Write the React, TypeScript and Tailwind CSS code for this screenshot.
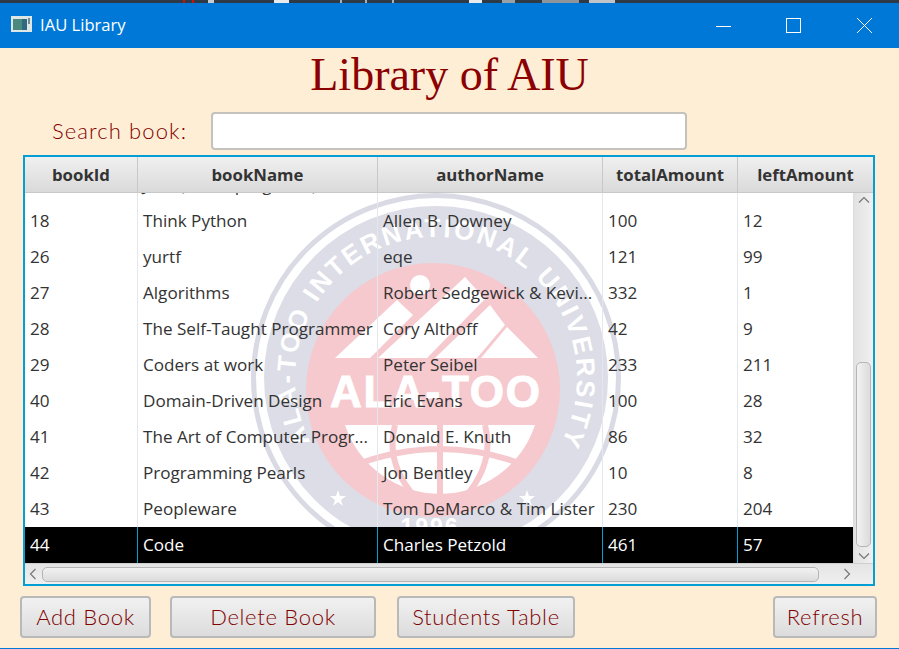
const rows = [
  ["18", "Think Python", "Allen B. Downey", "100", "12"],
  ["26", "yurtf", "eqe", "121", "99"],
  ["27", "Algorithms", "Robert Sedgewick & Kevi...", "332", "1"],
  ["28", "The Self-Taught Programmer", "Cory Althoff", "42", "9"],
  ["29", "Coders at work", "Peter Seibel", "233", "211"],
  ["40", "Domain-Driven Design", "Eric Evans", "100", "28"],
  ["41", "The Art of Computer Progr...", "Donald E. Knuth", "86", "32"],
  ["42", "Programming Pearls", "Jon Bentley", "10", "8"],
  ["43", "Peopleware", "Tom DeMarco & Tim Lister", "230", "204"],
];

const colClass = ["w-[113px]", "w-[240px]", "w-[225px]", "w-[135px]", "w-[115px]"];
const headClass = ["w-[113px]", "w-[240px]", "w-[225px]", "w-[135px]", "flex-1"];

function Seal() {
  return (
    <svg className="absolute left-[220px] top-0" width="400" height="372" viewBox="0 0 400 372">
      <defs>
        <path id="sealRing" d="M 65.4 249 A 141 141 0 1 1 316.6 249" />
      </defs>
      <circle cx="191" cy="185" r="182.5" fill="none" stroke="#d9dae4" strokeWidth="5" />
      <circle cx="191" cy="185" r="172" fill="#dcdde6" />
      <circle cx="188" cy="197" r="127" fill="#f5c9ce" />
      <text fontFamily="Liberation Sans, sans-serif" fontSize="26" fontWeight="700" fill="#ffffff">
        <textPath href="#sealRing" textLength="576" lengthAdjust="spacing">ALA-TOO INTERNATIONAL UNIVERSITY</textPath>
      </text>
      <polygon points="90,165 152,107 168,122 125,165" fill="#ffffff" />
      <polygon points="133,165 220,84 240,106 182,165" fill="#ffffff" />
      <polygon points="190,165 245,112 260,132 232,165" fill="#ffffff" />
      <polygon points="236,165 262,134 293,165" fill="#ffffff" />
      <circle cx="175" cy="92" r="10" fill="#ffffff" />
      <text x="190" y="214" textAnchor="middle" textLength="210" lengthAdjust="spacing" fontFamily="Liberation Sans, sans-serif" fontSize="44" fontWeight="700" fill="#ffffff" stroke="#ffffff" strokeWidth="1">
        ALA-TOO
      </text>
      <path d="M100 232 H290 A100 100 0 0 1 100 232 Z" fill="#ffffff" />
      <path d="M195 232V304M150 232Q140 270 170 304M240 232Q250 270 220 304M105 274Q195 238 285 274" fill="none" stroke="#f5c9ce" strokeWidth="6" />
      <polygon points="93,297 95,303 101,303 96,307 98,313 93,309 88,313 90,307 85,303 91,303" fill="#ffffff" />
      <polygon points="282,297 284,303 290,303 285,307 287,313 282,309 277,313 279,307 274,303 280,303" fill="#ffffff" />
      <text x="185" y="342" textAnchor="middle" fontFamily="Liberation Sans, sans-serif" fontSize="23" fontWeight="700" letterSpacing="2" fill="#ffffff">1996</text>
    </svg>
  );
}

function Btn({ label, className }: { label: string; className: string }) {
  return (
    <button className={"h-[42px] rounded-[4px] border-2 border-[#b9b9b9] bg-gradient-to-b from-[#f1f1f1] to-[#dcdcdc] pb-[2px] text-[22px] font-light tracking-[0.7px] text-[#800000] [font-family:'Lato',sans-serif] " + className}>
      {label}
    </button>
  );
}

export default function App() {
  return (
    <div className="flex h-[649px] w-[899px] flex-col overflow-hidden bg-[#2f3a47]">
      {/* bits of the window behind, showing above the title bar */}
      <div className="flex h-[3px] shrink-0">
        <div className="ml-[183px] w-[2px] bg-[#d01010]"></div>
        <div className="ml-[7px] w-[2px] bg-[#d01010]"></div>
        <div className="ml-[14px] w-[6px] bg-[#c8ccd0]"></div>
        <div className="ml-[60px] w-[15px] bg-[#e8eaec]"></div>
        <div className="ml-[51px] w-[2px] bg-[#aab0b6]"></div>
        <div className="ml-[23px] w-[2px] bg-[#aab0b6]"></div>
        <div className="ml-[25px] w-[2px] bg-[#aab0b6]"></div>
        <div className="ml-[75px] w-[13px] bg-[#e8eaec]"></div>
        <div className="ml-[20px] w-[13px] bg-[#9aa2a8]"></div>
        <div className="ml-[27px] w-[37px] bg-[#8e969c]"></div>
        <div className="ml-[10px] w-[26px] bg-[#c0c4c8]"></div>
      </div>
      <div className="flex h-[45px] shrink-0 items-center bg-[#0078d7] pl-[11px] text-white">
        <svg width="21" height="16" viewBox="0 0 21 16" className="mr-[8px] -mt-[3px]">
          <rect x="0" y="0" width="21" height="16" fill="#dfe6e6" />
          <rect x="2" y="3" width="9" height="11" fill="#4b8a7f" />
          <rect x="11" y="3" width="5" height="11" fill="#2f6a80" />
          <rect x="17" y="2" width="2" height="6" fill="#6c8f8f" />
        </svg>
        <span className="text-[16.6px] [font-family:'Open_Sans',sans-serif]">IAU Library</span>
        <div className="ml-auto mr-[26px] flex items-center">
          <svg width="16" height="16" viewBox="0 0 16 16" className="mr-[53px]"><path d="M0 8.5H15" stroke="#fff" strokeWidth="1" /></svg>
          <svg width="16" height="16" viewBox="0 0 16 16" className="mr-[55px]"><rect x="1.5" y="0.5" width="14" height="14" fill="none" stroke="#fff" /></svg>
          <svg width="17" height="17" viewBox="0 0 17 17"><path d="M1 1 16 16M16 1 1 16" stroke="#fff" strokeWidth="1" /></svg>
        </div>
      </div>

      <div className="flex min-h-0 flex-1 flex-col bg-[#ffeed6]">
        <h1 className="mt-[2px] h-[50px] text-center text-[46px] leading-[50px] text-[#8b0000] [font-family:'Liberation_Serif',serif]">
          Library of AIU
        </h1>
        <div className="mt-[12px] flex h-[38px] items-center pl-[52px]">
          <span className="w-[159px] pb-[2px] text-[22px] font-light tracking-[1.1px] text-[#800000] [font-family:'Lato',sans-serif]">Search book:</span>
          <div className="h-[38px] w-[476px] rounded-[4px] border-2 border-[#c4c2bd] bg-white"></div>
        </div>

        <div className="mx-[23px] mt-[5px] flex h-[431px] w-[852px] flex-col border-2 border-[#039ed3] bg-white text-[17.1px] text-[#333333] [font-family:'Open_Sans',sans-serif]">
          <div className="flex h-[36px] shrink-0 border-b border-[#c8c8c8] bg-gradient-to-b from-[#f0f0f0] to-[#dadada] text-[16.8px] font-bold">
            {["bookId", "bookName", "authorName", "totalAmount", "leftAmount"].map((h, i) => (
              <div key={h} className={headClass[i] + " flex items-center justify-center border-r border-[#c8c8c8] last:border-r-0"}>
                {h}
              </div>
            ))}
          </div>
          <div className="flex h-[370px] shrink-0">
            <div className="relative min-w-0 flex-1 overflow-hidden">
              <Seal />
              <div className="relative -mt-[26px]">
                <div className="flex h-[36px]">
                  <div className="w-[113px] shrink-0 border-r border-[#e4e8ee]"></div>
                  <div className="w-[240px] shrink-0 truncate border-r border-[#e4e8ee] pl-[5px] leading-[36px]">Java (for all programs)</div>
                  <div className="w-[225px] shrink-0 border-r border-[#e4e8ee]"></div>
                  <div className="w-[135px] shrink-0 border-r border-[#e4e8ee]"></div>
                </div>
                {rows.map((r) => (
                  <div key={r[0]} className="flex h-[36px]">
                    {r.map((c, i) => (
                      <div key={i} className={colClass[i] + " shrink-0 whitespace-nowrap border-r border-[#e4e8ee] pl-[5px] leading-[36px] last:border-r-0"}>
                        {c}
                      </div>
                    ))}
                  </div>
                ))}
                <div className="flex h-[36px] bg-black text-white">
                  {["44", "Code", "Charles Petzold", "461", "57"].map((c, i) => (
                    <div key={i} className={colClass[i] + " shrink-0 border-r border-[#039ed3] pl-[5px] leading-[36px] last:border-r-0"}>
                      {c}
                    </div>
                  ))}
                </div>
              </div>
            </div>
            <div className="flex w-[20px] shrink-0 flex-col items-center border-l border-[#dcdcdc] bg-gradient-to-r from-[#e2e2e2] to-[#f0f0f0]">
              <svg width="12" height="8" viewBox="0 0 12 8" className="mt-[3px]"><path d="M1 6.5 6 1.5 11 6.5" fill="none" stroke="#777" strokeWidth="1.2" /></svg>
              <div className="mt-[158px] h-[185px] w-[15px] rounded-[5px] border border-[#b5b5b5] bg-gradient-to-r from-[#f2f2f2] to-[#dcdcdc]"></div>
              <svg width="12" height="8" viewBox="0 0 12 8" className="mt-[5px]"><path d="M1 1.5 6 6.5 11 1.5" fill="none" stroke="#777" strokeWidth="1.2" /></svg>
            </div>
          </div>
          <div className="flex h-[21px] shrink-0 items-center border-t border-[#cfcfcf] bg-gradient-to-b from-[#e4e4e4] to-[#f0f0f0] pl-[4px]">
            <svg width="8" height="12" viewBox="0 0 8 12"><path d="M6.5 1 1.5 6 6.5 11" fill="none" stroke="#777" strokeWidth="1.2" /></svg>
            <div className="ml-[5px] h-[15px] w-[777px] rounded-[5px] border border-[#b5b5b5] bg-gradient-to-b from-[#f2f2f2] to-[#dcdcdc]"></div>
            <svg width="8" height="12" viewBox="0 0 8 12" className="ml-[24px]"><path d="M1.5 1 6.5 6 1.5 11" fill="none" stroke="#777" strokeWidth="1.2" /></svg>
          </div>
        </div>

        <div className="mt-[10px] flex pl-[20px] pr-[22px]">
          <Btn label="Add Book" className="w-[131px]" />
          <Btn label="Delete Book" className="ml-[19px] w-[206px]" />
          <Btn label="Students Table" className="ml-[21px] w-[178px]" />
          <Btn label="Refresh" className="ml-auto w-[104px]" />
        </div>
      </div>
      <div className="h-[1px] shrink-0 bg-[#0078d7]"></div>
    </div>
  );
}
